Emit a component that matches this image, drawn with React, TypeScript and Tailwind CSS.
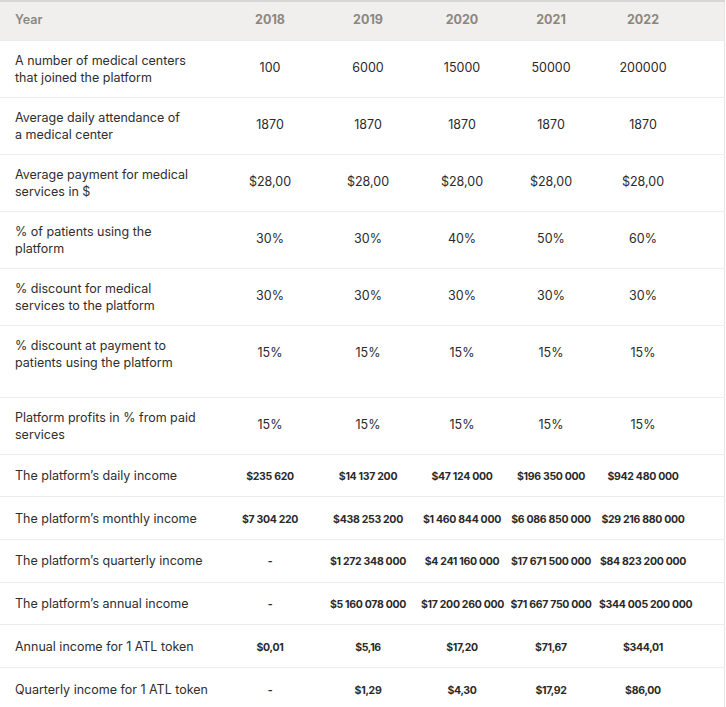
import React from "react";

type Row = {
    label: React.ReactNode;
    values: string[];
    bold?: boolean;
    tall?: boolean;
};

const years = ["2018", "2019", "2020", "2021", "2022"];

const rows: Row[] = [
    { label: <>A number of medical centers<br />that joined the platform</>, values: ["100", "6000", "15000", "50000", "200000"] },
    { label: <>Average daily attendance of<br />a medical center</>, values: ["1870", "1870", "1870", "1870", "1870"] },
    { label: <>Average payment for medical<br />services in $</>, values: ["$28,00", "$28,00", "$28,00", "$28,00", "$28,00"] },
    { label: <>% of patients using the<br />platform</>, values: ["30%", "30%", "40%", "50%", "60%"] },
    { label: <>% discount for medical<br />services to the platform</>, values: ["30%", "30%", "30%", "30%", "30%"] },
    { label: <>% discount at payment to<br />patients using the platform</>, values: ["15%", "15%", "15%", "15%", "15%"], tall: true },
    { label: <>Platform profits in % from paid<br />services</>, values: ["15%", "15%", "15%", "15%", "15%"] },
    { label: "The platform’s daily income", values: ["$235 620", "$14 137 200", "$47 124 000", "$196 350 000", "$942 480 000"], bold: true },
    { label: "The platform’s monthly income", values: ["$7 304 220", "$438 253 200", "$1 460 844 000", "$6 086 850 000", "$29 216 880 000"], bold: true },
    { label: "The platform’s quarterly income", values: ["-", "$1 272 348 000", "$4 241 160 000", "$17 671 500 000", "$84 823 200 000"], bold: true },
    { label: "The platform’s annual income", values: ["-", "$5 160 078 000", "$17 200 260 000", "$71 667 750 000", "$344 005 200 000"], bold: true },
    { label: "Annual income for 1 ATL token", values: ["$0,01", "$5,16", "$17,20", "$71,67", "$344,01"], bold: true },
    { label: "Quarterly income for 1 ATL token", values: ["-", "$1,29", "$4,30", "$17,92", "$86,00"], bold: true },
];

const colWidths = ["w-[225px]", "w-[90px]", "w-[106px]", "w-[82px]", "w-[96px]", "w-[88px]"];

export default function App() {
    return (
        <div className="w-[726px] h-[707px] overflow-hidden bg-white font-['Inter',sans-serif]">
            <table className="w-[725px] table-fixed border-collapse border-t-2 border-t-[#d6d6d6] border-r border-r-[#e6e6e6]">
                <colgroup>
                    {colWidths.map(w => <col key={w} className={w} />)}
                    <col />
                </colgroup>
                <thead className="bg-[#f0efed]">
                    <tr className="h-[39px]">
                        <th className="pl-[15px] text-left text-[12.5px] font-semibold text-[#8c867e]">Year</th>
                        {years.map(y => (
                            <th key={y} className="text-center text-[12.5px] font-bold text-[#8c867e]">{y}</th>
                        ))}
                        <th />
                    </tr>
                </thead>
                <tbody>
                    {rows.map((row, i) => (
                        <tr
                            key={i}
                            className={`border-t border-t-[#ececec] ${row.tall ? "h-[72px]" : row.bold ? "h-[42.7px]" : "h-[57px]"}`}
                        >
                            <td className={`pl-[15px] whitespace-nowrap text-[12.5px] leading-[17px] text-[#2e2e2e] ${row.tall ? "pb-[15px]" : ""}`}>
                                {row.label}
                            </td>
                            {row.values.map((v, j) => (
                                <td
                                    key={j}
                                    className={`text-center whitespace-nowrap text-[#2a2a2a] ${row.tall ? "pb-[15px]" : ""} ${row.bold ? "pt-[3px] text-[10.5px] font-bold tracking-[-0.3px]" : "text-[12.5px]"}`}
                                >
                                    {v}
                                </td>
                            ))}
                            <td />
                        </tr>
                    ))}
                </tbody>
            </table>
        </div>
    );
}
